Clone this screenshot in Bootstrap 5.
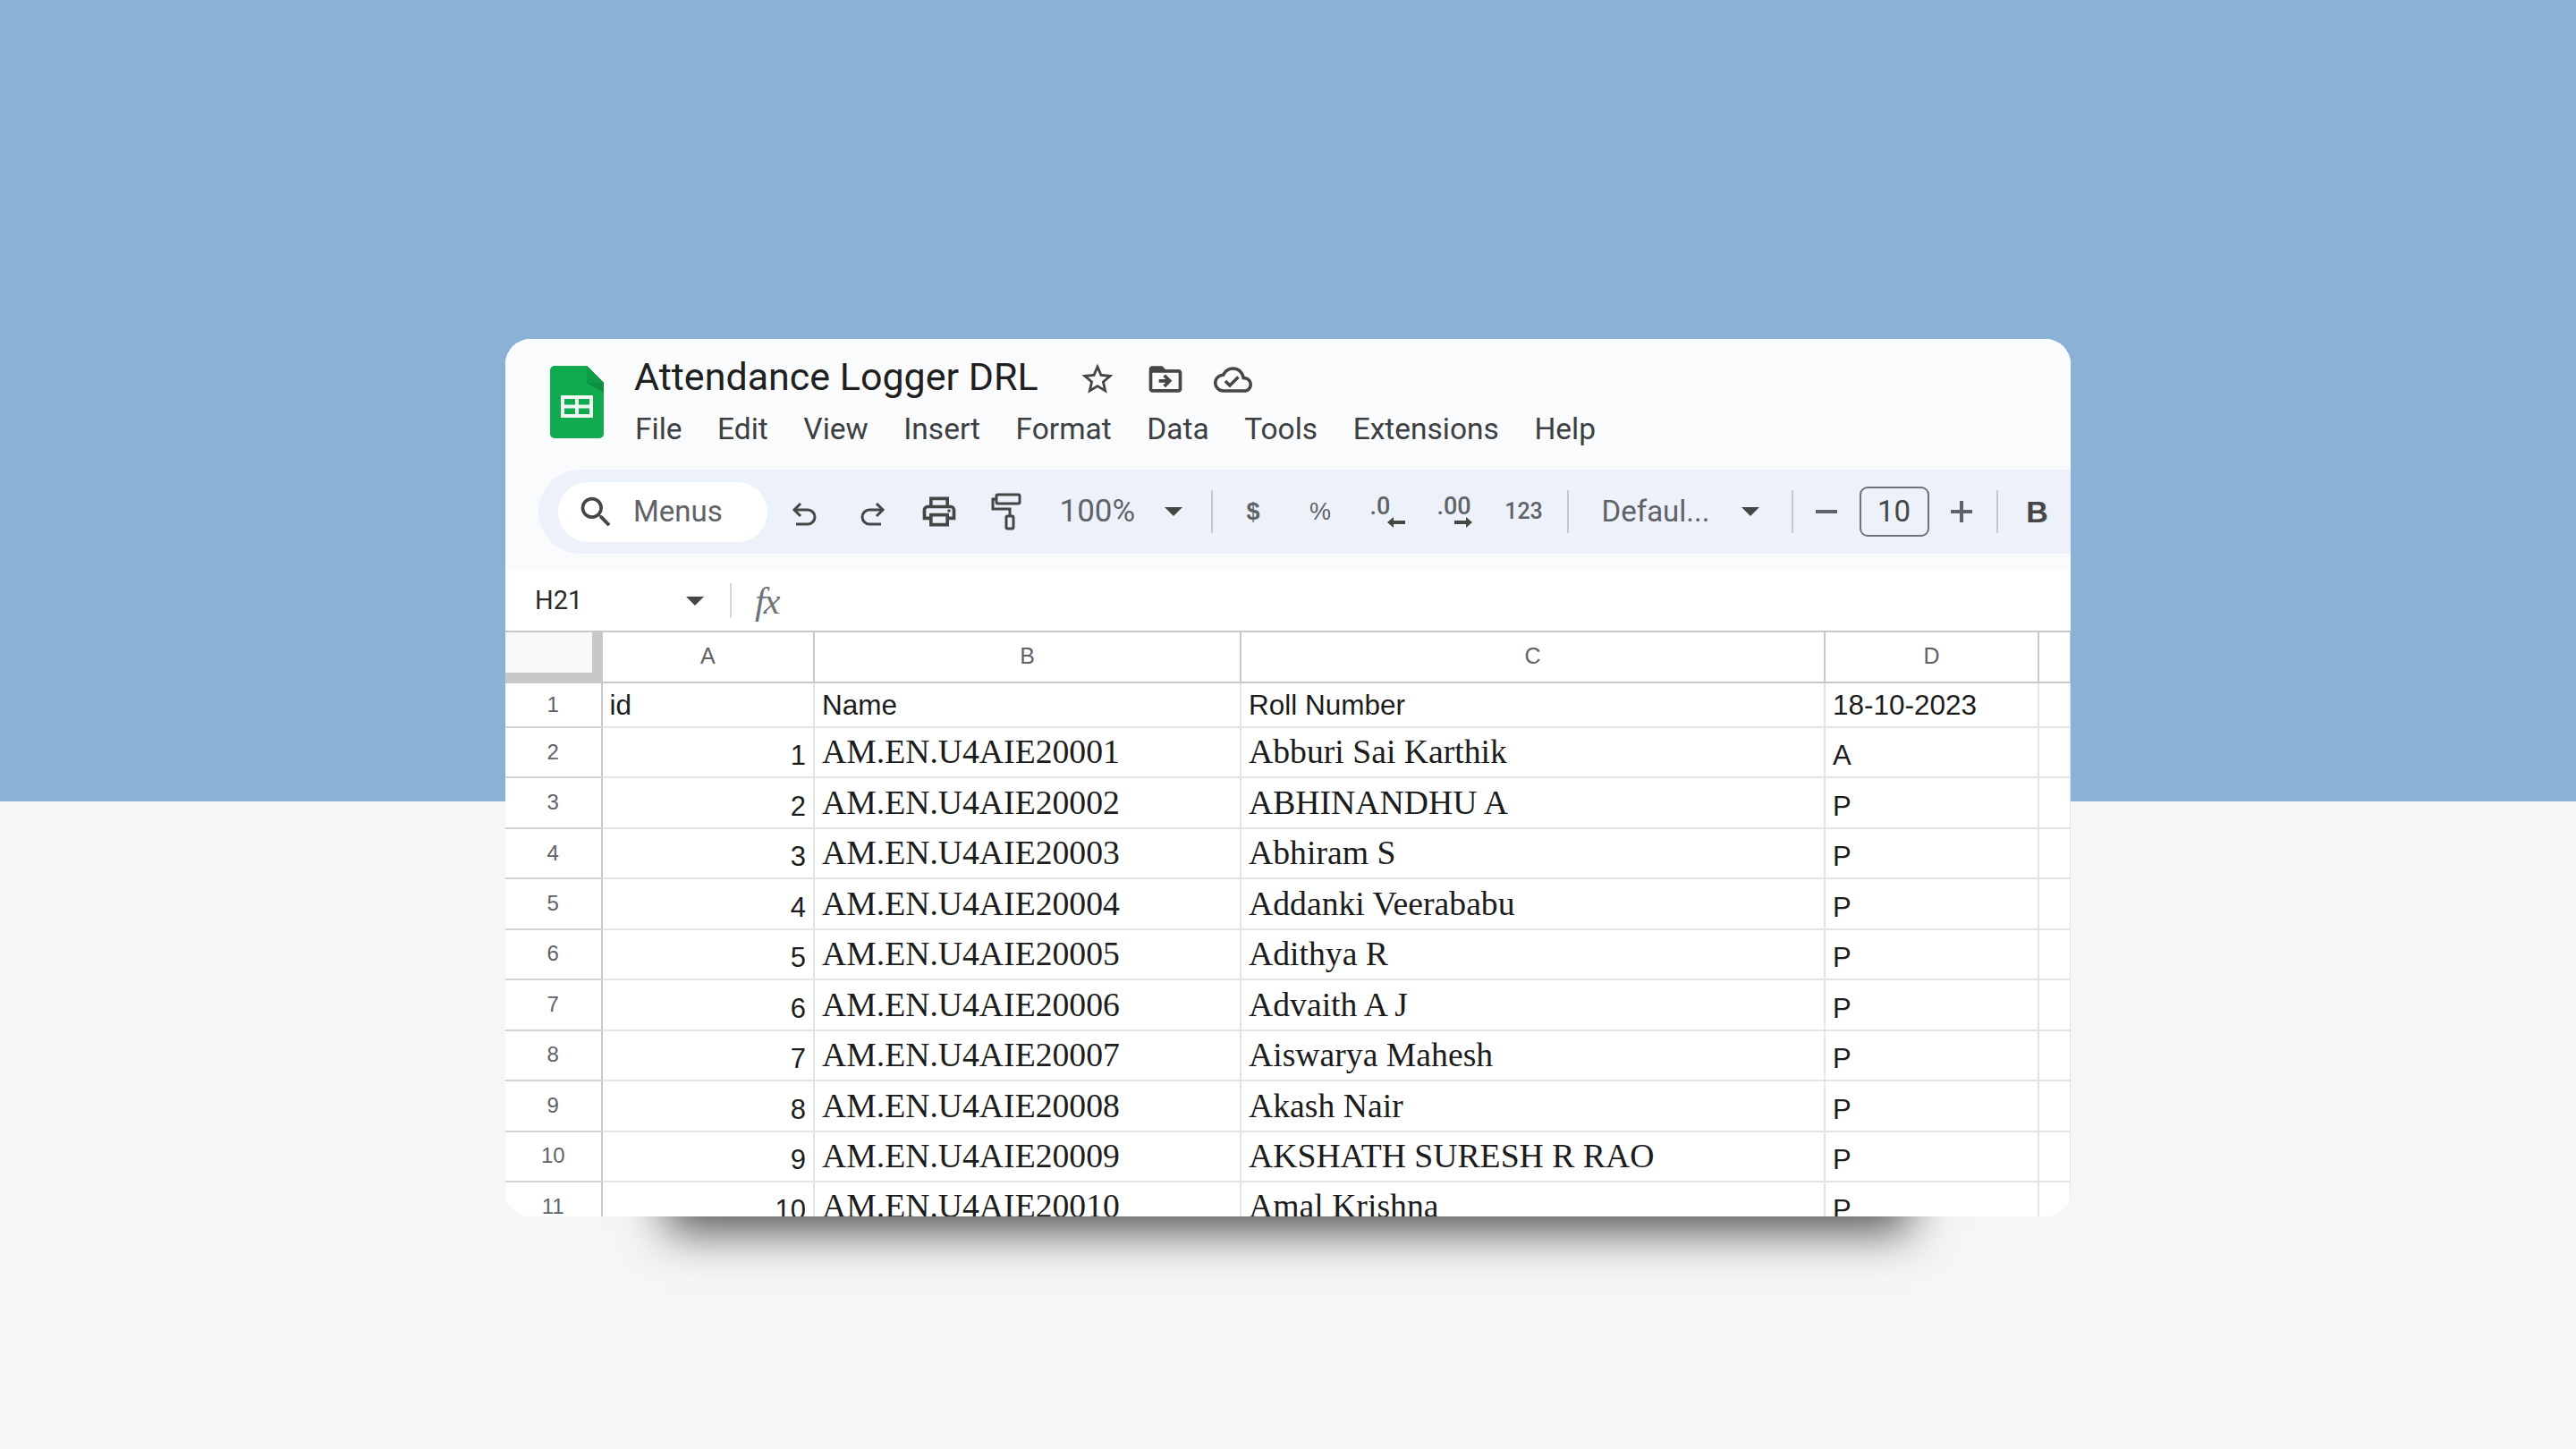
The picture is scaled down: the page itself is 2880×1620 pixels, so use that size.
<!doctype html>
<html lang="en">
<head>
<meta charset="utf-8">
<title>Attendance Logger DRL</title>
<link rel="stylesheet" href="https://cdn.jsdelivr.net/npm/bootstrap@5.3.0/dist/css/bootstrap.min.css">
<style>
body{margin:0;min-height:1620px;background:linear-gradient(to bottom,#8bb1d6 0,#8bb1d6 896px,#f6f6f6 896px);font-family:Roboto,"Liberation Sans",sans-serif;overflow:hidden}
.stage{padding-top:379px}
.sheet-card{width:1750px;height:981px;border-radius:28px;overflow:hidden;background:#fff;box-shadow:0 196px 50px -180px rgba(0,0,0,.68)}
.head-area{background:#f9fbfd;height:259px}
.top-area{height:146px;padding-top:12px}
.doc-logo{width:60px;height:81px;margin:18px 34px 0 50px}
.doc-title{width:497px;height:58px;line-height:58px;font-size:43px;color:#1f1f1f;margin:0;font-weight:400}
.title-row{height:60px}
.title-icon{margin-top:6px}
.ms33{margin-left:33px}.ms32{margin-left:32px}
.menu-row{height:58px;gap:39.5px;flex-wrap:nowrap;margin-left:1px}
.menu-row .nav-link{padding:0;color:#3c4043;font-size:33.5px;line-height:58px}
.tool-bar{height:94px;margin-left:37px;background:#edf2fa;border-radius:47px 0 0 47px;padding-left:22px;color:#444746;white-space:nowrap}
.search-pill{width:234px;height:67px;border-radius:34px;background:#fff;padding-left:20px;color:#5f6368;font-size:33px;flex:none}
.search-pill span{margin-left:19px}
.first-tool{margin-left:4.5px}
.tool{width:75px;height:94px;flex:none}
.zoom-tool{width:127.5px;padding-left:22px;font-size:35px;justify-content:flex-start!important;color:#5f6368}
.arrow-slot{width:44px;height:94px;flex:none}
.sep{width:2px;height:48px;background:#c7c7c7;flex:none}
.sep-a{margin:0 7.5px 0 20px}
.sep-b{margin:0 37px 0 8px}
.sep-c{margin:0 0 0 4px}
.sep-d{margin:0 0 0 3px}
.sym{font-size:27px;color:#5f6368;font-family:"Liberation Sans",sans-serif}
.sym-bold{font-weight:700}
.dec-stack{width:39px;font-size:27px;line-height:22px;color:#5f6368;font-weight:500}
.dec-stack svg{display:block;margin-top:1px}
.shift-a{margin-left:19px}
.shift-b{margin-left:19px}
.num-tool{width:80px;font-size:25px;color:#5f6368;font-weight:500}
.font-name{width:124px;font-size:33px;color:#5f6368;flex:none}
.font-arrow{width:84px}
.minus-slot{width:74px}
.size-box{width:78px;height:56px;border:2px solid #6f7377;border-radius:9px;font-size:33px;color:#444746;flex:none}
.plus-slot{width:72px}
.bold-slot{width:88px;font-weight:700;font-size:34px;font-family:"Liberation Sans",sans-serif;color:#444746}
.formula-row{height:67px;background:#fff;padding-left:33px}
.cell-ref{width:169px;font-size:29px;color:#2a2a2a;flex:none}
.ref-arrow{width:20px;flex:none}
.formula-sep{width:2px;height:39px;background:#d5d7d9;margin:0 26px 0 29px;flex:none}
.fx-mark{font-family:"Liberation Serif",serif;font-style:italic;font-size:42px;color:#6f7478;letter-spacing:-2px;line-height:1}
.sheet-grid{table-layout:fixed;width:1750px;border-collapse:collapse;margin:0;color:#1c1c1c;background:#fff}
.sheet-grid>tbody>tr>td,.sheet-grid>thead>tr>th{padding:0 8px;border:2px solid #e3e4e5;font-weight:400;overflow:hidden;white-space:nowrap;box-shadow:none;background:#fff;color:#1c1c1c}
.sheet-grid>thead>tr>th{height:57px;border-color:#c6c8ca;border-top-color:#c6c8ca;text-align:center;font-family:"Liberation Sans",sans-serif;font-size:25px;color:#5f6368;vertical-align:middle;padding-bottom:2px}
.sheet-grid>thead>tr>th.corner-cell{background:#f8f9fa;box-shadow:inset -10px -10px 0 #c6c8ca;border-left:0}
.sheet-grid>tbody>tr{height:56.44px}
.sheet-grid>tbody>tr.first-row{height:50px}
.sheet-grid>tbody>tr>td{vertical-align:bottom;font-family:"Liberation Sans",sans-serif;font-size:31px;line-height:36px;padding-bottom:5px}
.sheet-grid>tbody>tr>td.row-no{text-align:center;vertical-align:middle;font-size:24px;line-height:28px;color:#5f6368;padding:0 0 1px;border-left:0;border-right-color:#c6c8ca;border-bottom-color:#d2d3d5}
.sheet-grid>tbody>tr>td.serif-cell{font-family:"Liberation Serif",serif;font-size:37.7px;line-height:40px;padding-bottom:8px}
.sheet-grid>tbody>tr>td.num-cell{text-align:right}
.sheet-grid>tbody>tr.first-row>td.head-cell{font-size:31.5px;padding-bottom:6px}
.c0{width:107.5px}.c1{width:237.5px}.c2{width:477px}.c3{width:653px}.c4{width:239px}.c5{width:36px}
</style>
</head>
<body>
<main class="stage d-flex justify-content-center">
<section class="sheet-card">
  <header class="head-area">
    <div class="top-area d-flex align-items-start">
      <svg class="doc-logo" viewBox="0 0 60 81" role="img" aria-label="Sheets logo"><path d="M5 0h36l19 19v57a5 5 0 0 1-5 5H5a5 5 0 0 1-5-5V5a5 5 0 0 1 5-5z" fill="#10ab4e"/><path d="M41 0l19 19v11L41 19z" fill="#0d8f41"/><path d="M41 0l19 19H44a3 3 0 0 1-3-3z" fill="#0f9a46"/><path d="M12 33h36v25H12z M16 37v6.500h12V37z M32 37v6.500h12V37z M16 47.500V54h12v-6.500z M32 47.500V54h12v-6.500z" fill="#eef8f1" fill-rule="evenodd"/></svg>
      <div>
        <div class="title-row d-flex align-items-center">
          <h1 class="doc-title">Attendance Logger DRL</h1>
          <svg class="title-icon" width="42" height="42" viewBox="0 0 24 24" fill="#444746"><path d="M22 9.240l-7.190-.620L12 2 9.190 8.630 2 9.240l5.460 4.730L5.820 21 12 17.270 18.180 21l-1.630-7.030L22 9.240zM12 15.400l-3.760 2.270 1-4.280-3.320-2.880 4.380-.380L12 6.100l1.710 4.040 4.380.380-3.320 2.880 1 4.280L12 15.400z"/></svg>
          <svg class="ms33 title-icon" width="44" height="44" viewBox="0 0 24 24" fill="#444746"><path d="M20 6h-8l-2-2H4c-1.100 0-1.990.9-1.990 2L2 18c0 1.100.9 2 2 2h16c1.100 0 2-.9 2-2V8c0-1.100-.9-2-2-2zm0 12H4V8h16v10zm-8.010-9l-1.410 1.410L12.160 12H8v2h4.160l-1.590 1.590L11.990 17 16 13.010 11.990 9z"/></svg>
          <svg class="ms32 title-icon" width="43" height="43" viewBox="0 0 24 24" fill="#444746"><path d="M19.350 10.040C18.670 6.590 15.640 4 12 4 9.110 4 6.600 5.640 5.350 8.040 2.340 8.360 0 10.910 0 14c0 3.310 2.690 6 6 6h13c2.760 0 5-2.240 5-5 0-2.640-2.050-4.780-4.650-4.960zM19 18H6c-2.210 0-4-1.790-4-4 0-2.050 1.530-3.760 3.560-3.970l1.070-.110.5-.950C8.080 7.140 9.940 6 12 6c2.620 0 4.880 1.860 5.390 4.430l.3 1.500 1.530.110c1.560.1 2.780 1.410 2.780 2.960 0 1.650-1.350 3-3 3zm-9-3.820l-2.090-2.090L6.500 13.500 10 17l6.010-6.010-1.410-1.410z"/></svg>
        </div>
        <nav class="nav menu-row">
          <a class="nav-link" href="#">File</a><a class="nav-link" href="#">Edit</a><a class="nav-link" href="#">View</a><a class="nav-link" href="#">Insert</a><a class="nav-link" href="#">Format</a><a class="nav-link" href="#">Data</a><a class="nav-link" href="#">Tools</a><a class="nav-link" href="#">Extensions</a><a class="nav-link" href="#">Help</a>
        </nav>
      </div>
    </div>
    <div class="tool-bar d-flex align-items-center">
      <div class="search-pill d-flex align-items-center">
        <svg width="45" height="45" viewBox="0 0 24 24" fill="#444746"><path d="M15.500 14h-.79l-.28-.27A6.471 6.471 0 0 0 16 9.500 6.500 6.500 0 1 0 9.500 16c1.610 0 3.090-.59 4.230-1.570l.27.28v.79l5 4.990L20.490 19l-4.990-5zm-6 0C7.010 14 5 11.990 5 9.500S7.010 5 9.500 5 14 7.010 14 9.500 11.990 14 9.500 14z"/></svg>
        <span>Menus</span>
      </div>
      <div class="tool first-tool d-flex align-items-center justify-content-center"><svg class="mt-2" width="32" height="30" viewBox="0 0 32 30" fill="none" stroke="#444746" stroke-width="3"><path d="M4 9h15a8 8 0 0 1 0 16H6"/><path d="M11 2L4 9l7 7"/></svg></div>
      <div class="tool d-flex align-items-center justify-content-center"><svg class="mt-2" width="32" height="30" viewBox="0 0 32 30" fill="none" stroke="#444746" stroke-width="3"><path d="M28 9H13a8 8 0 0 0 0 16h13"/><path d="M21 2l7 7-7 7"/></svg></div>
      <div class="tool d-flex align-items-center justify-content-center"><svg width="44" height="44" viewBox="0 0 24 24" fill="#444746"><path d="M19 8h-1V3H6v5H5c-1.660 0-3 1.340-3 3v6h4v4h12v-4h4v-6c0-1.660-1.340-3-3-3zM8 5h8v3H8V5zm8 12v2H8v-4h8v2zm2-2v-2H6v2H4v-4c0-.55.45-1 1-1h14c.55 0 1 .45 1 1v4h-2z"/><circle cx="18" cy="11.500" r="1"/></svg></div>
      <div class="tool d-flex align-items-center justify-content-center"><svg width="34" height="42" viewBox="0 0 34 42" fill="none" stroke="#444746" stroke-width="3"><rect x="6" y="2" width="26" height="10" rx="1.500"/><path d="M6 7H2v11h19v8"/><rect x="17" y="26" width="8" height="14" rx="1.500"/></svg></div>
      <div class="tool zoom-tool d-flex align-items-center">100%</div>
      <div class="arrow-slot d-flex align-items-center justify-content-center"><svg width="20" height="10" viewBox="0 0 20 10" fill="#444746"><path d="M0 0h20L10 10z"/></svg></div>
      <div class="sep sep-a"></div>
      <div class="tool sym sym-bold d-flex align-items-center justify-content-center">$</div>
      <div class="tool sym d-flex align-items-center justify-content-center">%</div>
      <div class="tool d-flex align-items-center justify-content-center"><div class="dec-stack"><span>.0</span><svg class="shift-a" width="20" height="12" viewBox="0 0 20 12" fill="#444746"><path d="M7 0v4h13v4H7v4L0 6z"/></svg></div></div>
      <div class="tool d-flex align-items-center justify-content-center"><div class="dec-stack"><span>.00</span><svg class="shift-b" width="20" height="12" viewBox="0 0 20 12" fill="#444746"><path d="M13 0v4H0v4h13v4l7-6z"/></svg></div></div>
      <div class="tool num-tool d-flex align-items-center justify-content-center">123</div>
      <div class="sep sep-b"></div>
      <div class="font-name">Defaul...</div>
      <div class="arrow-slot font-arrow d-flex align-items-center justify-content-center"><svg width="20" height="10" viewBox="0 0 20 10" fill="#444746"><path d="M0 0h20L10 10z"/></svg></div>
      <div class="sep sep-c"></div>
      <div class="tool minus-slot d-flex align-items-center justify-content-center"><svg width="24" height="4" viewBox="0 0 24 4" fill="#5f6368"><path d="M0 0h24v4H0z"/></svg></div>
      <div class="size-box d-flex align-items-center justify-content-center">10</div>
      <div class="tool plus-slot d-flex align-items-center justify-content-center"><svg width="24" height="24" viewBox="0 0 24 24" fill="#5f6368"><path d="M10 0h4v10h10v4H14v10h-4V14H0v-4h10z"/></svg></div>
      <div class="sep sep-d"></div>
      <div class="tool bold-slot d-flex align-items-center justify-content-center">B</div>
    </div>
  </header>
  <div class="formula-row d-flex align-items-center">
    <div class="cell-ref">H21</div>
    <svg class="ref-arrow" width="20" height="10" viewBox="0 0 20 10" fill="#444746"><path d="M0 0h20L10 10z"/></svg>
    <div class="formula-sep"></div>
    <div class="fx-mark">fx</div>
  </div>
  <table class="table sheet-grid">
    <colgroup><col class="c0"><col class="c1"><col class="c2"><col class="c3"><col class="c4"><col class="c5"></colgroup>
    <thead><tr><th class="corner-cell"></th><th>A</th><th>B</th><th>C</th><th>D</th><th></th></tr></thead>
    <tbody>
      <tr class="first-row"><td class="row-no">1</td><td class="head-cell">id</td><td class="head-cell">Name</td><td class="head-cell">Roll Number</td><td class="head-cell">18-10-2023</td><td></td></tr>
      <tr><td class="row-no">2</td><td class="num-cell">1</td><td class="serif-cell">AM.EN.U4AIE20001</td><td class="serif-cell">Abburi Sai Karthik</td><td>A</td><td></td></tr>
      <tr><td class="row-no">3</td><td class="num-cell">2</td><td class="serif-cell">AM.EN.U4AIE20002</td><td class="serif-cell">ABHINANDHU A</td><td>P</td><td></td></tr>
      <tr><td class="row-no">4</td><td class="num-cell">3</td><td class="serif-cell">AM.EN.U4AIE20003</td><td class="serif-cell">Abhiram S</td><td>P</td><td></td></tr>
      <tr><td class="row-no">5</td><td class="num-cell">4</td><td class="serif-cell">AM.EN.U4AIE20004</td><td class="serif-cell">Addanki Veerababu</td><td>P</td><td></td></tr>
      <tr><td class="row-no">6</td><td class="num-cell">5</td><td class="serif-cell">AM.EN.U4AIE20005</td><td class="serif-cell">Adithya R</td><td>P</td><td></td></tr>
      <tr><td class="row-no">7</td><td class="num-cell">6</td><td class="serif-cell">AM.EN.U4AIE20006</td><td class="serif-cell">Advaith A J</td><td>P</td><td></td></tr>
      <tr><td class="row-no">8</td><td class="num-cell">7</td><td class="serif-cell">AM.EN.U4AIE20007</td><td class="serif-cell">Aiswarya Mahesh</td><td>P</td><td></td></tr>
      <tr><td class="row-no">9</td><td class="num-cell">8</td><td class="serif-cell">AM.EN.U4AIE20008</td><td class="serif-cell">Akash Nair</td><td>P</td><td></td></tr>
      <tr><td class="row-no">10</td><td class="num-cell">9</td><td class="serif-cell">AM.EN.U4AIE20009</td><td class="serif-cell">AKSHATH SURESH R RAO</td><td>P</td><td></td></tr>
      <tr><td class="row-no">11</td><td class="num-cell">10</td><td class="serif-cell">AM.EN.U4AIE20010</td><td class="serif-cell">Amal Krishna</td><td>P</td><td></td></tr>
    </tbody>
  </table>
</section>
</main>
<script src="https://cdn.jsdelivr.net/npm/bootstrap@5.3.0/dist/js/bootstrap.bundle.min.js"></script>
</body>
</html>
